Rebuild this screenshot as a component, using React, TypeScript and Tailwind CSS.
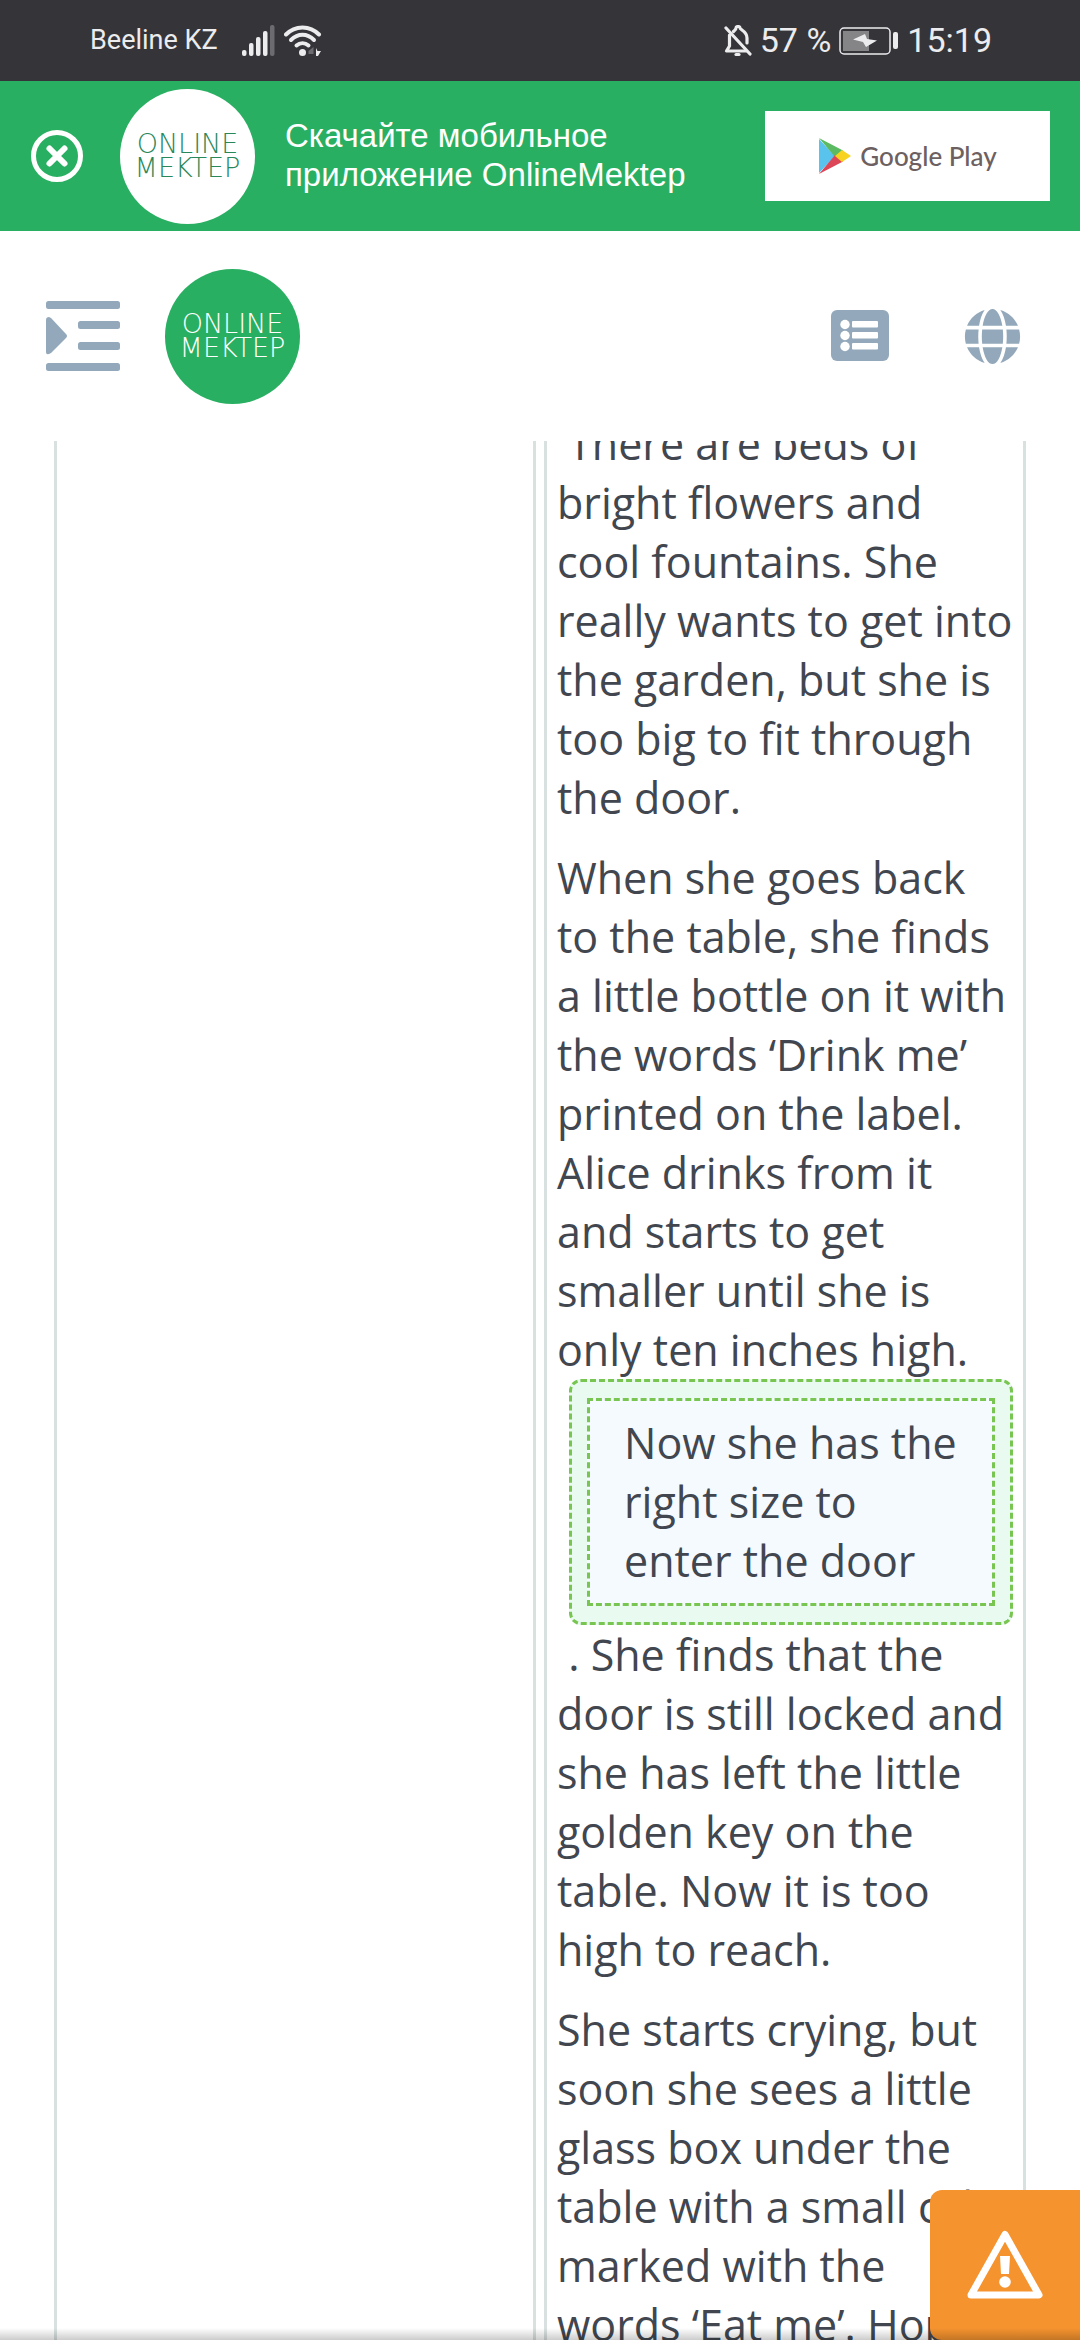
import React from 'react';
import { FaGlobe } from 'react-icons/fa';

interface LogoProps {
  className: string;
}

const Logo: React.FC<LogoProps> = ({ className }) => (
  <a
    href="#"
    className={`flex h-[135px] w-[135px] shrink-0 flex-col items-center justify-center rounded-full font-['DejaVu_Sans',sans-serif] text-[27px] leading-6 font-extralight ${className}`}
  >
    <span>ONLINE</span>
    <span>MEKTEP</span>
  </a>
);

const StatusBar: React.FC = () => (
  <div className="flex h-[81px] shrink-0 items-center justify-between bg-[#353539] pr-[88px] pl-[90px] font-[Roboto,sans-serif] text-[#ececee]">
    <div className="flex items-center">
      <span className="text-[27px]">Beeline KZ</span>
      <svg className="ml-6" width="34" height="32" viewBox="0 0 34 32" fill="currentColor">
        <rect x="0" y="25" width="4.500" height="6" rx="2" />
        <rect x="7" y="18" width="4.500" height="13" rx="2" />
        <rect x="14" y="12" width="4.500" height="19" rx="2" />
        <rect x="21" y="6" width="4.500" height="25" rx="2" />
        <rect x="28" y="0" width="4.500" height="31" rx="2" fill="#6c6c70" />
      </svg>
      <svg className="ml-2" width="38" height="32" viewBox="0 0 38 32" fill="none" stroke="currentColor" strokeWidth="4" strokeLinecap="round">
        <path d="M2 9.500C11 0 26 0 35 9.500" />
        <path d="M7 15C14 8 23 8 30 15" />
        <path d="M12.500 20.500C16 17.500 21 17.500 24.500 20.500" />
        <circle cx="18.500" cy="27.500" r="3.500" fill="currentColor" stroke="none" />
        <path d="M29.500 22V31L29.500 29H24.500V26z" fill="#6c6c70" stroke="none" />
        <path d="M32 23l1.500 3h3.500l-3 5h-2z" fill="currentColor" stroke="none" />
      </svg>
    </div>
    <div className="flex items-center">
      <svg width="28" height="32" viewBox="0 0 28 32" fill="none" stroke="currentColor" strokeWidth="3.200" strokeLinecap="round" strokeLinejoin="round">
        <path d="M2 3L26 29" />
        <path d="M5.500 10V21L2.500 26H22" />
        <path d="M9.500 6.500C11 5 12 4.500 12 3C12 1 16 1 16 3C16 5 23 6 23 13V18" />
        <path d="M12 29.500h3" />
      </svg>
      <span className="ml-2 text-[34px]">57 %</span>
      <svg className="ml-2" width="60" height="28" viewBox="0 0 60 28">
        <rect x="1" y="1" width="50" height="26" rx="4" fill="none" stroke="currentColor" strokeWidth="1.500" />
        <rect x="4" y="4" width="26" height="20" fill="#858588" />
        <path d="M14 12.500L26 7l2 5 10 1.500L27 20l-3-5z" fill="currentColor" />
        <rect x="54" y="5" width="5" height="17" rx="2" fill="currentColor" />
      </svg>
      <span className="ml-2 text-[34px]">15:19</span>
    </div>
  </div>
);

const AppBanner: React.FC = () => (
  <div className="flex h-[150px] shrink-0 items-center bg-[#29af61] pr-[30px] pl-[31px]">
    <button type="button" aria-label="Закрыть" className="shrink-0">
      <svg width="52" height="52" viewBox="0 0 52 52" fill="none" stroke="#fff">
        <circle cx="26" cy="26" r="23.500" strokeWidth="5" />
        <path d="M18.500 18.500L33.500 33.500M33.500 18.500L18.500 33.500" strokeWidth="6" strokeLinecap="round" />
      </svg>
    </button>
    <Logo className="ml-[37px] bg-white text-[#29885a]" />
    <p className="ml-[30px] flex-1 pb-[2px] font-['Liberation_Sans',sans-serif] text-[33px] leading-[39px] text-white">
      Скачайте мобильное
      <br />
      приложение OnlineMektep
    </p>
    <a href="#" className="flex h-[90px] w-[285px] shrink-0 items-center justify-center gap-2 bg-white font-[Lato,sans-serif] text-[26px] font-medium text-[#6d6061]">
      <svg width="34" height="36" viewBox="0 0 34 36">
        <path d="M1 1V35L17 18z" fill="#59c3ee" />
        <path d="M1 0L25 12.500L17 19z" fill="#5cba62" />
        <path d="M1 36L25 23.500L17 17z" fill="#dc4657" />
        <path d="M24 12L33 18L24 24L17 18z" fill="#f7d21e" />
      </svg>
      Google Play
    </a>
  </div>
);

const NavBar: React.FC = () => (
  <header className="flex h-[210px] shrink-0 items-center bg-white px-[46px] text-[#93a9bb]">
    <button type="button" aria-label="Меню">
      <svg width="74" height="70" viewBox="0 0 74 70" fill="currentColor">
        <rect x="0" y="0" width="74" height="8" rx="2.500" />
        <rect x="32" y="20" width="42" height="8" rx="2.500" />
        <rect x="32" y="41" width="42" height="8" rx="2.500" />
        <rect x="0" y="62" width="74" height="8" rx="2.500" />
        <path d="M0 19Q0 16 3 16L5 17L20 33Q22 35 20 37L5 52Q0 55 0 51z" />
      </svg>
    </button>
    <Logo className="ml-[45px] bg-[#29af61] text-white" />
    <div className="ml-auto flex items-center gap-[75px] pr-[13px]">
      <button type="button" aria-label="Список">
        <svg width="58" height="52" viewBox="0 0 58 52">
          <rect width="58" height="51" rx="6" fill="currentColor" />
          <g fill="#fff">
            <circle cx="14" cy="14.500" r="4.700" />
            <circle cx="14" cy="25.500" r="4.700" />
            <circle cx="14" cy="36.500" r="4.700" />
            <rect x="21" y="11" width="26" height="6.500" rx="1" />
            <rect x="21" y="22" width="26" height="6.500" rx="1" />
            <rect x="21" y="33" width="26" height="6.500" rx="1" />
          </g>
        </svg>
      </button>
      <button type="button" aria-label="Язык">
        <FaGlobe size={57} />
      </button>
    </div>
  </header>
);

const Story: React.FC = () => (
  <div className="-mt-[27px] flex flex-col gap-[21px]">
    <p>
      &nbsp;There are beds of bright flowers and cool fountains. She really wants to get into the
      garden, but she is too big to fit through the door.
    </p>
    <p>
      When she goes back to the table, she finds a little bottle on it with the words ‘Drink me’
      printed on the label. Alice drinks from it and starts to get smaller until she is only ten
      inches high.
      <span className="ml-3 block rounded-xl border-3 border-dashed border-[#78c651] bg-[#e9fbf1] px-[15px] py-4">
        <span className="block border-3 border-dashed border-[#78c651] bg-[#f5faff] pt-3 pr-5 pb-[13px] pl-[34px]">
          Now she has the right size to enter the door
        </span>
      </span>
      &nbsp;. She finds that the door is still locked and she has left the little golden key on the
      table. Now it is too high to reach.
    </p>
    <p>
      She starts crying, but soon she sees a little glass box under the table with a small cake
      marked with the words ‘Eat me’. Hoping
    </p>
  </div>
);

const App: React.FC = () => {
  return (
    <div className="relative flex h-screen flex-col overflow-hidden bg-white">
      <StatusBar />
      <AppBanner />
      <NavBar />
      <main className="grid min-h-0 flex-1 grid-cols-2 gap-2 overflow-hidden px-[54px] font-['Open_Sans',sans-serif] text-[43px] leading-[59px] text-[#41464f]">
        <div className="border-x-3 border-[#d9e0e0]" />
        <div className="border-x-3 border-[#d9e0e0] px-[10px]">
          <Story />
        </div>
      </main>

      <button
        type="button"
        aria-label="Сообщить об ошибке"
        className="absolute right-0 bottom-0 flex h-[150px] w-[150px] items-center justify-center rounded-l-xl bg-[#f5932f]"
      >
        <svg width="78" height="70" viewBox="0 0 78 70">
          <path d="M39 4.500L73 65H5z" fill="none" stroke="#fff" strokeWidth="7" strokeLinejoin="round" />
          <path d="M34 26h10l-1 18h-8z" fill="#fff" />
          <circle cx="39" cy="52" r="5.800" fill="#fff" />
        </svg>
      </button>
      <div className="pointer-events-none absolute inset-x-0 bottom-0 h-3 bg-gradient-to-b from-transparent to-black/20" />
    </div>
  );
};

export default App;
